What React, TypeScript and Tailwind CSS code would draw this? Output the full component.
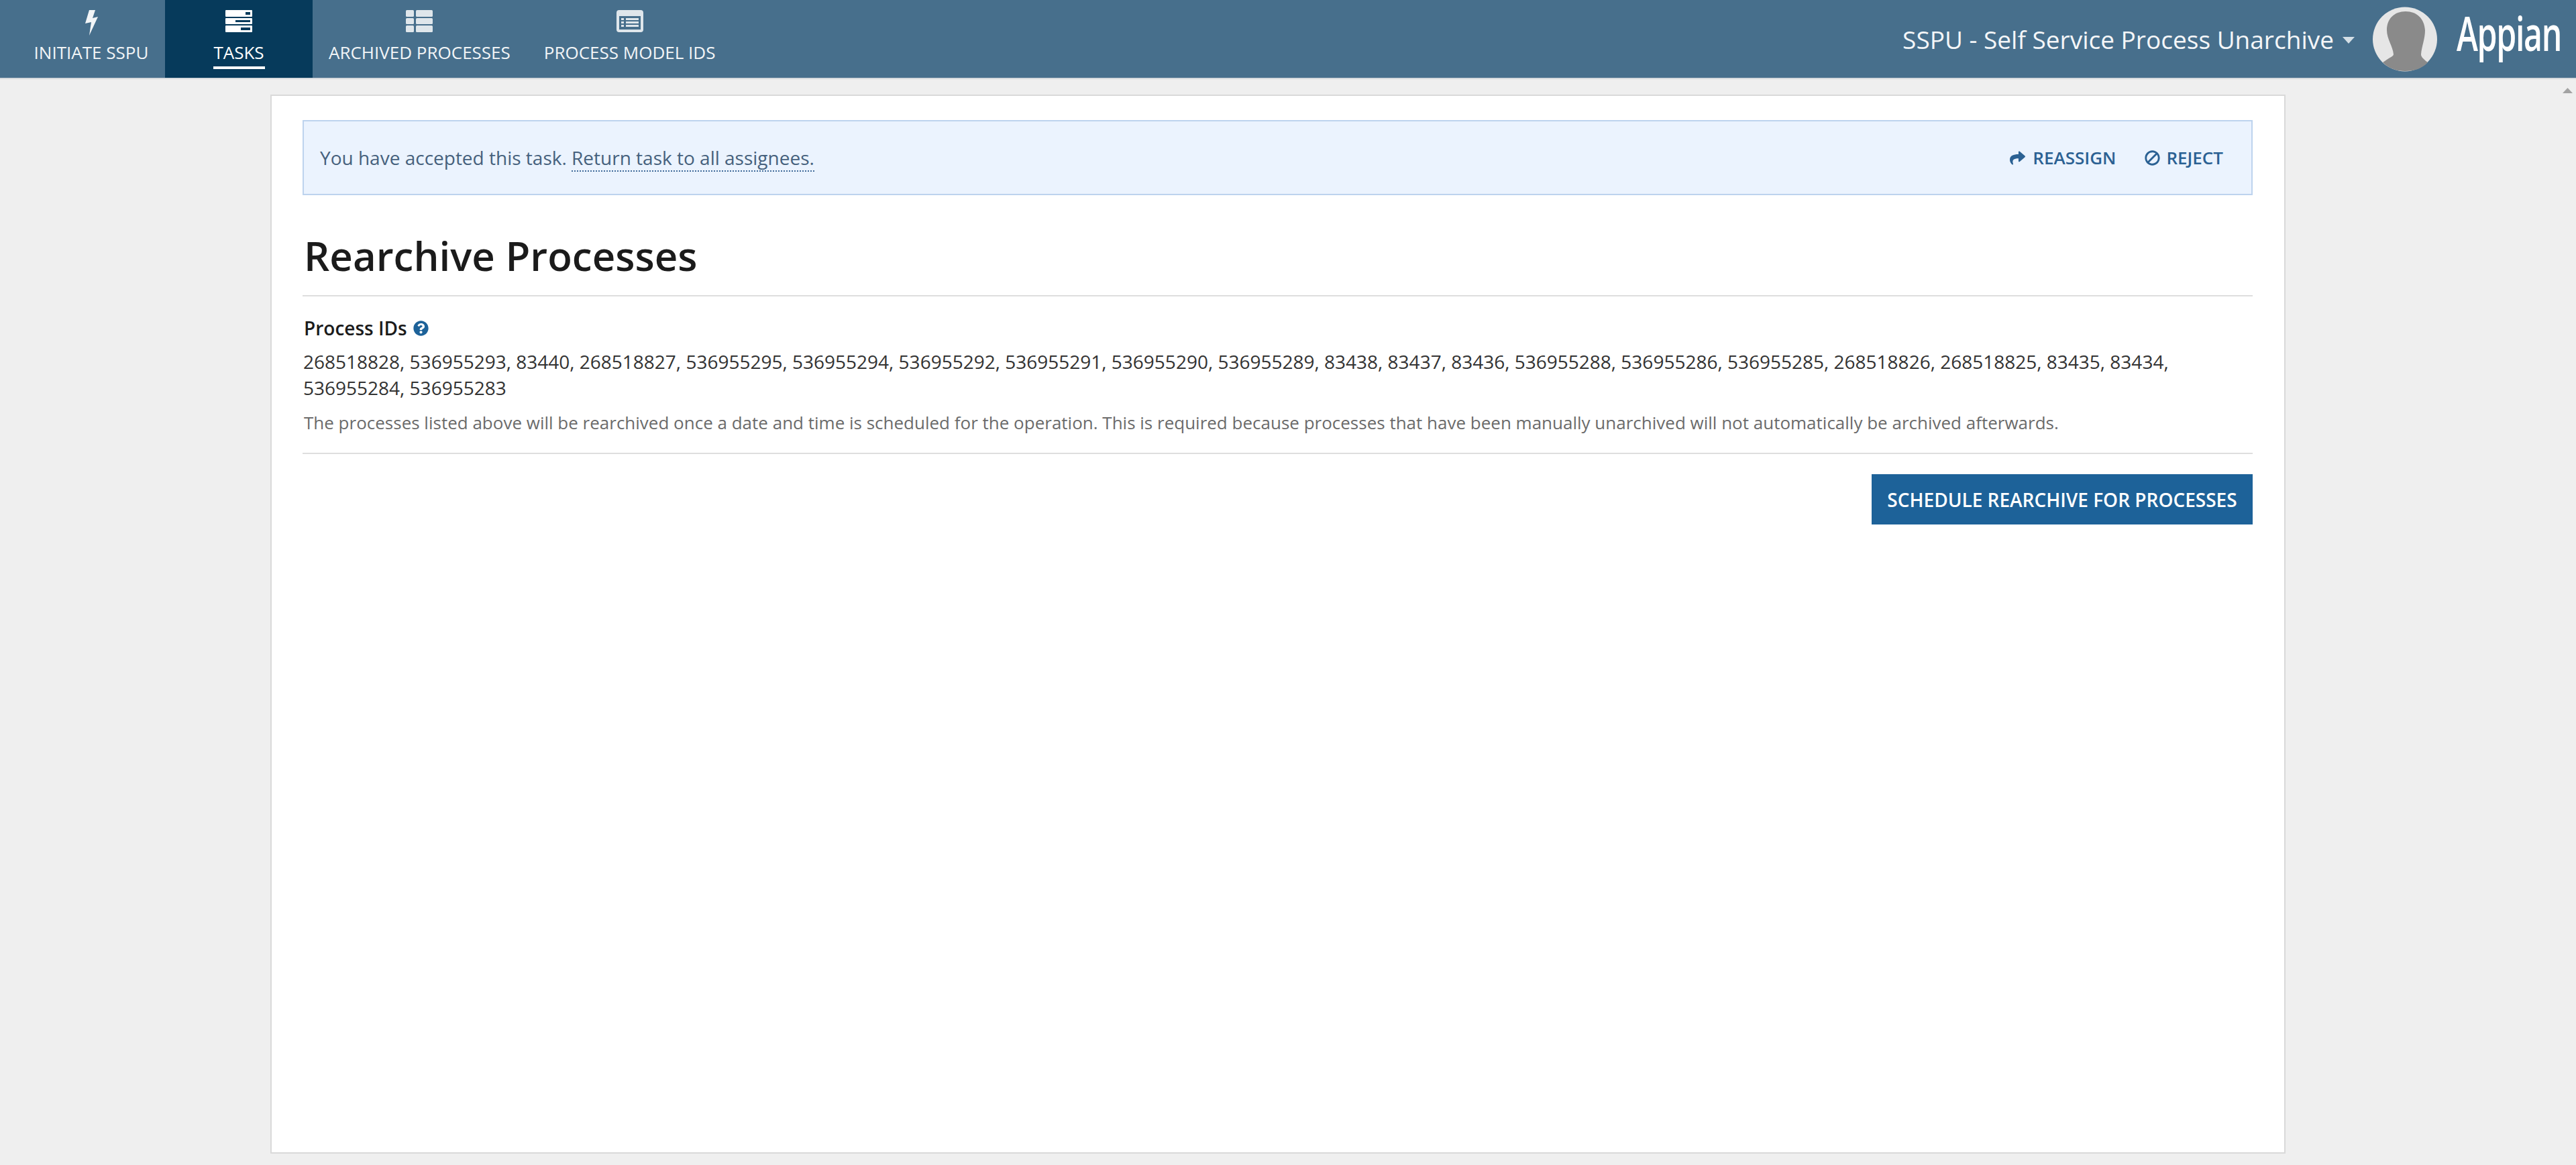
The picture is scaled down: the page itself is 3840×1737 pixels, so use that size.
import { FaBan, FaQuestionCircle, FaShare } from "react-icons/fa";

const font = "font-['Open_Sans',sans-serif]";

function BoltIcon() {
  return (
    <svg viewBox="0 0 19 38" className="h-[38px] w-[19px]" fill="currentColor">
      <polygon points="6,0 15,0 11,12 19,10 6,38 9,18 0,20" />
    </svg>
  );
}

function TasksIcon() {
  return (
    <svg viewBox="0 0 40 33" className="h-[33px] w-[40px]" fill="currentColor">
      <path fillRule="evenodd" d="M1 0h38a1 1 0 0 1 1 1v8a1 1 0 0 1-1 1H1a1 1 0 0 1-1-1V1a1 1 0 0 1 1-1zm29 3v4h7V3zM1 12h38a1 1 0 0 1 1 1v7a1 1 0 0 1-1 1H1a1 1 0 0 1-1-1v-7a1 1 0 0 1 1-1zm14 3v3h22v-3zM1 23h38a1 1 0 0 1 1 1v8a1 1 0 0 1-1 1H1a1 1 0 0 1-1-1v-8a1 1 0 0 1 1-1zm22 3v4h14v-4z" />
    </svg>
  );
}

function ArchivedIcon() {
  return (
    <svg viewBox="0 0 40 33" className="h-[33px] w-[40px]" fill="currentColor">
      <rect x="0" y="0" width="12" height="10" rx="1.5" />
      <rect x="15" y="0" width="25" height="10" rx="1.5" />
      <rect x="0" y="12" width="12" height="9" rx="1.5" />
      <rect x="15" y="12" width="25" height="9" rx="1.5" />
      <rect x="0" y="23" width="12" height="10" rx="1.5" />
      <rect x="15" y="23" width="25" height="10" rx="1.5" />
    </svg>
  );
}

function ModelIcon() {
  return (
    <svg viewBox="0 0 40 33" className="h-[33px] w-[40px]" fill="currentColor">
      <path fillRule="evenodd" d="M4 0h32a4 4 0 0 1 4 4v25a4 4 0 0 1-4 4H4a4 4 0 0 1-4-4V4a4 4 0 0 1 4-4zM4 9v20h32V9zM7 12h4v3H7zm7 0h19v3H14zM7 17h4v3H7zm7 0h19v3H14zM7 22h4v3H7zm7 0h19v3H14z" />
    </svg>
  );
}

export default function App() {
  return (
    <div className={`${font} flex h-screen flex-col overflow-hidden bg-[#efefef]`}>
      <header className="flex h-[118px] shrink-0 items-stretch border-b-2 border-[#d6dade] bg-[#476f8c] pl-[26px] text-white">
        <a className="flex w-[220px] flex-col items-center pt-[15px]">
          <span className="text-[#f2f5f7]"><BoltIcon /></span>
          <span className="mt-[13px] text-[26px] leading-[24px] text-[#f2f5f7]">INITIATE SSPU</span>
        </a>
        <a className="flex w-[220px] flex-col items-center bg-[#063a5b] pt-[15px]">
          <TasksIcon />
          <span className="mt-[18px] text-[26px] leading-[24px]">TASKS</span>
          <span className="mt-[9px] h-[4px] w-[77px] bg-white" />
        </a>
        <a className="flex flex-col items-center px-6 pt-[15px]">
          <span className="text-[#dfe6eb]"><ArchivedIcon /></span>
          <span className="mt-[18px] text-[26px] leading-[24px] text-[#f2f5f7]">ARCHIVED PROCESSES</span>
        </a>
        <a className="flex flex-col items-center pl-[26px] pr-6 pt-[15px]">
          <span className="text-[#dfe6eb]"><ModelIcon /></span>
          <span className="mt-[18px] text-[26px] leading-[24px] text-[#f2f5f7]">PROCESS MODEL IDS</span>
        </a>
        <div className="ml-auto flex items-center pr-[22px]">
          <span className="text-[37px] font-medium leading-none text-[#f4f6f8]">SSPU - Self Service Process Unarchive</span>
          <svg viewBox="0 0 18 10" className="ml-[13px] mt-[4px] h-[10px] w-[18px]">
            <polygon points="0,0 18,0 9,10" fill="#d5dfe6" />
          </svg>
          <svg viewBox="0 0 96 97" className="ml-[27px] h-[97px] w-[96px]">
            <circle cx="48" cy="48.5" r="48" fill="#e6e6e6" />
            <path d="M49 7c17 0 28 11 29 28 0 13-5 24-6 36 0 3 2 6 10 12-8 9-20 13-34 13S24 92 15 83c8-6 16-9 16-12C30 59 21 48 21 35 21 18 32 7 49 7z" fill="#8a8a8a" />
          </svg>
          <span className="mb-[20px] ml-[29px] w-[156px] origin-left scale-x-[0.68] whitespace-nowrap text-[71px] font-semibold leading-none tracking-[-2px] text-white">Appian</span>
        </div>
      </header>

      <div className="relative flex min-h-0 flex-1 pl-[403px]">
        <svg viewBox="0 0 15 8" className="absolute right-[5px] top-[13px] h-[8px] w-[15px]">
          <polygon points="7.5,0 15,8 0,8" fill="#a3a3a3" />
        </svg>
        <main className="mb-[17px] mt-[23px] flex w-[3004px] flex-col border-2 border-[#d9d9d9] bg-white pl-[46px] pr-[47px] pt-[36px]">
          <div className="flex h-[112px] shrink-0 items-center justify-between border-2 border-[#bdd3ee] bg-[#ebf3fe] pl-[24px] pr-[42px]">
            <p className="text-[28px] text-[#46617d]">
              You have accepted this task.{" "}
              <a className="border-b-2 border-dotted border-[#3f6a99] text-[#46617d]">Return task to all assignees.</a>
            </p>
            <div className="flex items-center text-[26px] font-semibold text-[#2b6193]">
              <FaShare className="h-[23px] w-[27px]" />
              <span className="ml-[9px]">REASSIGN</span>
              <FaBan className="ml-[43px] h-[23px] w-[23px] -scale-x-100" />
              <span className="ml-[9px]">REJECT</span>
            </div>
          </div>

          <h1 className="mt-[52px] pl-[2px] text-[60px] font-[550] leading-[76px] text-[#1b1b1b]">Rearchive Processes</h1>
          <hr className="mt-[21px] border-t-2 border-[#dedede]" />

          <div className="mt-[29px] flex items-center pl-[2px]">
            <span className="text-[28px] font-semibold leading-[36px] text-[#1b1b1b]">Process IDs</span>
            <FaQuestionCircle className="ml-[9px] h-[23px] w-[23px] text-[#1d6299]" />
          </div>
          <p className="mt-[13px] pl-[1px] text-[28px] leading-[39px] text-[#333333]">
            268518828, 536955293, 83440, 268518827, 536955295, 536955294, 536955292, 536955291, 536955290, 536955289, 83438, 83437, 83436, 536955288, 536955286, 536955285, 268518826, 268518825, 83435, 83434, 536955284, 536955283
          </p>
          <p className="mt-[14px] pl-[2px] text-[26px] leading-[36px] text-[#6b6b6b]">
            The processes listed above will be rearchived once a date and time is scheduled for the operation. This is required because processes that have been manually unarchived will not automatically be archived afterwards.
          </p>
          <hr className="mt-[27px] border-t-2 border-[#dedede]" />

          <div className="mt-[30px] flex justify-end">
            <button className="h-[75px] w-[568px] bg-[#1d6299] text-[28px] font-semibold text-white">
              SCHEDULE REARCHIVE FOR PROCESSES
            </button>
          </div>
        </main>
      </div>
    </div>
  );
}
